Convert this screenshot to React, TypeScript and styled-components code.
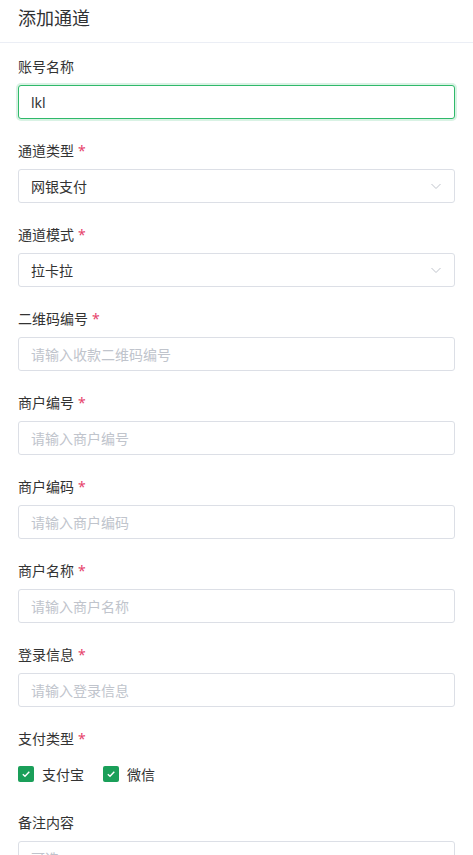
import React from 'react';
import styled, { createGlobalStyle } from 'styled-components';

const GlobalStyle = createGlobalStyle`
  body {
    margin: 0;
    background: #fff;
    font-family: "Noto Sans", "Noto Sans CJK SC", sans-serif;
    color: #333;
  }
`

const Page = styled.div`
  width: 473px;
  height: 855px;
  overflow: hidden;
  background: #fff;
`

const Header = styled.div`
  display: flex;
  align-items: center;
  padding: 0 18px;
  border-bottom: 1px solid #ebeef5;
  box-sizing: border-box;
  height: 43px;
`

const Title = styled.h1`
  margin: 0;
  font-size: 18px;
  font-weight: 400;
  color: #303133;
  margin-top: -8px;
`

const Form = styled.form`
  padding: 13px 18px 0;
  display: flex;
  flex-direction: column;
`

const Field = styled.div<{ $gap?: number }>`
  display: flex;
  flex-direction: column;
  margin-bottom: ${p => p.$gap ?? 22}px;
`

const Label = styled.label`
  font-size: 14px;
  line-height: 22px;
  color: #333;
  margin-bottom: 7px;
`

const Star = styled.span`
  color: #e6436b;
  margin-left: 4px;
`

const Input = styled.input<{ $focus?: boolean }>`
  height: 34px;
  box-sizing: border-box;
  border: 1px solid ${p => (p.$focus ? '#2fb96a' : '#dcdfe6')};
  box-shadow: ${p => (p.$focus ? '0 0 0 2px rgba(47,185,106,0.18)' : 'none')};
  border-radius: 3px;
  padding: 0 12px;
  font-size: 14px;
  font-family: inherit;
  color: #333;
  outline: none;
  &::placeholder {
    color: #c0c4cc;
  }
`

const Select = styled.div`
  height: 34px;
  box-sizing: border-box;
  border: 1px solid #dcdfe6;
  border-radius: 3px;
  padding: 0 12px;
  display: flex;
  align-items: center;
  justify-content: space-between;
  font-size: 14px;
  color: #333;
`

const Chevron = () => (
  <svg width="12" height="12" viewBox="0 0 12 12" fill="none">
    <path d="M1.5 4 L6 8.5 L10.5 4" stroke="#c0c4cc" strokeWidth="1" />
  </svg>
)

const Checks = styled.div`
  display: flex;
  align-items: center;
  gap: 19px;
  height: 24px;
  margin-top: 5px;
`

const Check = styled.span`
  display: flex;
  align-items: center;
  gap: 8px;
  font-size: 14px;
  color: #333;
`

const Box = styled.span`
  width: 16px;
  height: 16px;
  border-radius: 2px;
  background: #1a9f59;
  display: flex;
  align-items: center;
  justify-content: center;
`

const Tick = () => (
  <svg width="10" height="10" viewBox="0 0 10 10" fill="none">
    <path d="M1.8 5.2 L4 7.2 L8.3 2.8" stroke="#fff" strokeWidth="1.4" />
  </svg>
)

const Textarea = styled.textarea`
  height: 60px;
  box-sizing: border-box;
  border: 1px solid #dcdfe6;
  border-radius: 3px;
  padding: 6px 12px;
  font-size: 14px;
  font-family: inherit;
  resize: none;
  outline: none;
  &::placeholder {
    color: #c0c4cc;
  }
`

const textFields = [
  { label: '二维码编号', ph: '请输入收款二维码编号' },
  { label: '商户编号', ph: '请输入商户编号' },
  { label: '商户编码', ph: '请输入商户编码' },
  { label: '商户名称', ph: '请输入商户名称' },
  { label: '登录信息', ph: '请输入登录信息' },
]

export default function App() {
  return (
    <Page>
      <GlobalStyle />
      <Header>
        <Title>添加通道</Title>
      </Header>
      <Form>
        <Field $gap={21}>
          <Label>账号名称</Label>
          <Input $focus defaultValue="lkl" />
        </Field>
        <Field $gap={21}>
          <Label>通道类型<Star>*</Star></Label>
          <Select>网银支付<Chevron /></Select>
        </Field>
        <Field $gap={21}>
          <Label>通道模式<Star>*</Star></Label>
          <Select>拉卡拉<Chevron /></Select>
        </Field>
        {textFields.map(f => (
          <Field key={f.label} $gap={21}>
            <Label>{f.label}<Star>*</Star></Label>
            <Input placeholder={f.ph} />
          </Field>
        ))}
        <Field $gap={26}>
          <Label>支付类型<Star>*</Star></Label>
          <Checks>
            <Check><Box><Tick /></Box>支付宝</Check>
            <Check><Box><Tick /></Box>微信</Check>
          </Checks>
        </Field>
        <Field>
          <Label>备注内容</Label>
          <Textarea placeholder="可选" />
        </Field>
      </Form>
    </Page>
  )
}
